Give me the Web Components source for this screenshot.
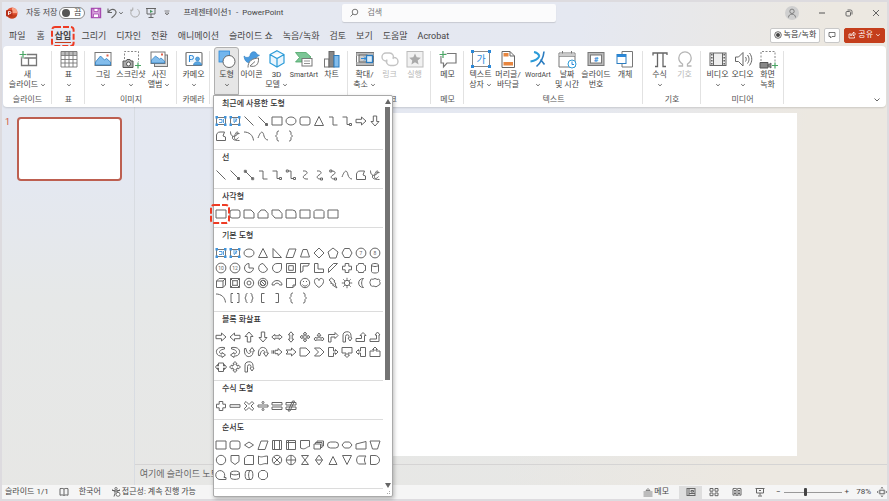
<!DOCTYPE html>
<html lang="ko">
<head>
<meta charset="utf-8">
<title>프레젠테이션1 - PowerPoint</title>
<style>
body { margin: 0; font-family: Roboto, "Noto Sans CJK KR", sans-serif; font-size: 8px; line-height: 10px; color: #454545; }
</style>
</head>
<body>
<ppt-app></ppt-app>
<script>
const define = (name, html, setup) => customElements.define(name, class extends HTMLElement {
  connectedCallback() {
    if (this.shadowRoot) return;
    const t = document.createElement('template');
    t.innerHTML = typeof html === 'function' ? html(this) : html;
    this.attachShadow({ mode: 'open' }).appendChild(t.content.cloneNode(true));
    if (setup) setup(this);
  }
});

/* ---------- application icons ---------- */
const G = 'fill="none" stroke="#666" stroke-width="1"';
const B = 'fill="none" stroke="#2b88d8" stroke-width="1"';
const ICONS = {
  logo: [12, 12, `<circle cx="6" cy="6" r="5.5" fill="#e2573a"/><path d="M6 .5a5.500 5.500 0 0 1 5.500 5.500H6z" fill="#f9a184"/><path d="M.7 7.500a5.500 5.500 0 0 0 10.600 0z" fill="#c43e1c"/><rect x="0" y="3" width="6.500" height="6.500" rx="1" fill="#b7301a"/><path d="M2.500 8V4.500h1.300a1.100 1.100 0 0 1 0 2.200H2.500" fill="none" stroke="#fff" stroke-width=".9"/>`],
  save: [12, 12, `<path d="M1.500 1.500h9v9h-9z" fill="#d7a3dc" stroke="#a64ab0" stroke-width="1.400"/><path d="M4 1.500h4v3H4zM3.500 7h5v3.500h-5z" fill="#fff" stroke="#a64ab0" stroke-width=".8"/>`],
  undo: [12, 12, `<path d="M2 1.500v4h4M2.300 5.200C4 2.500 7 1.500 9 3.200c2.500 2.300.5 4.800-3.500 7.800" fill="none" stroke="#666" stroke-width="1.100"/>`],
  redo: [12, 12, `<path d="M8.500 2.200a4.300 4.300 0 1 1-5.200.3M3.800 .5v2.700H1" fill="none" stroke="#aaa" stroke-width="1"/>`],
  show: [12, 12, `<path d="M1 1.500h10M2 1.500v5.500h8V1.500M6 7v3M3.500 10.500h5" ${G}/><path d="M5 2.800l3 1.700-3 1.600z" fill="#4a9a62"/>`],
  more: [8, 8, `<path d="M1.500 2h5M2 4l2 2 2-2z" fill="none" stroke="#777" stroke-width=".9"/>`],
  caret: [6, 4, `<path d="M1.200 1.200l1.800 1.600 1.800-1.600" fill="none" stroke="currentColor" stroke-width=".9" opacity=".85"/>`],
  chevron: [8, 6, `<path d="M1.500 1.500L4 4l2.500-2.500" fill="none" stroke="#666" stroke-width="1"/>`],
  search: [10, 10, `<circle cx="6" cy="4" r="2.800" fill="none" stroke="#777"/><path d="M4 6L1.500 8.500" stroke="#777"/>`],
  user: [14, 14, `<circle cx="7" cy="7" r="7" fill="#cfcfcf"/><circle cx="7" cy="5.300" r="2.200" fill="none" stroke="#777" stroke-width=".9"/><path d="M3.500 11.500c0-4.500 7-4.500 7 0" fill="none" stroke="#777" stroke-width=".9"/>`],
  min: [8, 8, `<path d="M1 4h6" stroke="#555"/>`],
  restore: [8, 8, `<rect x="1" y="2.500" width="4.500" height="4.500" rx="1" ${G}/><path d="M2.500 1h3a1.500 1.500 0 0 1 1.500 1.500v3" ${G}/>`],
  close: [8, 8, `<path d="M1 1l6 6M7 1L1 7" stroke="#555" stroke-width=".9"/>`],
  record: [8, 8, `<circle cx="4" cy="4" r="3.300" fill="none" stroke="#444" stroke-width=".8"/><circle cx="4" cy="4" r="2" fill="#444"/>`],
  bubble: [8, 8, `<path d="M1 1.500h6v4H4L2.500 7V5.500H1z" fill="none" stroke="#555" stroke-width=".8"/>`],
  share: [8, 8, `<path d="M3 3H1v4h5.500V5.500M2.700 5c.2-2 1.300-2.700 2.800-2.700V1l2 2-2 2V3.700c-1.300 0-2 .3-2.800 1.300z" fill="none" stroke="#fff" stroke-width=".8"/>`],

  newslide: [20, 18, `<path d="M5.500 4.500h13v11h-15v-9M3.500 8h15M10.500 8v7.500" fill="none" stroke="#777" stroke-width="1.300"/><path d="M5 .5v8M1 4.500h8" stroke="#fff" stroke-width="2.600"/><path d="M5 1v7M1.500 4.500h7" stroke="#4aa564" stroke-width="1.200"/>`],
  table: [20, 18, `<path d="M2 1.500h16v16H2z" fill="#fff"/><path d="M2 1h16v4H2z" fill="#bbb"/><path d="M2 1.500h16v15.500H2zM2 5.500h16M2 9.500h16M2 13h16M6 1.500v15.500M10 1.500v15.500M14 1.500v15.500" fill="none" stroke="#777" stroke-width=".9"/>`],
  picture: [20, 18, `<rect x="2" y="2.500" width="16" height="13" fill="#fff" stroke="#777"/><path d="M2.500 12l5-6 4 4 2-1.500 4 3.500v3h-15z" fill="#83bdec" stroke="#2b7cc0" stroke-width=".8"/><rect x="13.500" y="4.500" width="2" height="2" fill="#e0604a"/>`],
  screenshot: [20, 18, `<path d="M3.500 9V1.500h14V12" fill="none" stroke="#888" stroke-dasharray="2 1.500"/><path d="M2 11h3l1-1.500h3l1 1.500h2v6.500H2z" fill="#aaa" stroke="#555"/><circle cx="7.500" cy="14" r="2" fill="#fff" stroke="#555"/><path d="M17 12.500v6M14 15.500h6" stroke="#4aa564" stroke-width="1.200"/>`],
  album: [20, 18, `<rect x="5.500" y="5" width="13" height="11.500" fill="#ddd" stroke="#777"/><rect x="2" y="2" width="14" height="11.500" fill="#fff" stroke="#777"/><path d="M2.500 10l4-4 4 3 1.500-1 3.500 3v2h-13z" fill="#83bdec" stroke="#2b7cc0" stroke-width=".7"/><rect x="12" y="3.500" width="2" height="2" fill="#e0604a"/>`],
  cameo: [20, 18, `<rect x="2" y="2.500" width="16" height="13" rx="1" fill="#fff" stroke="#777" stroke-width="1.200"/><path d="M4.500 5h6v7h-6z" fill="#e4f1fb"/><path d="M5.500 12V5.500h2a2 2 0 0 1 0 4h-2" ${B}/><circle cx="13.500" cy="9" r="2" fill="#5aa7e2" stroke="#2b7cc0" stroke-width=".6"/><path d="M9.500 15c0-4.500 8-4.500 8 0z" fill="#5aa7e2" stroke="#2b7cc0" stroke-width=".6"/>`],
  shapes: [20, 18, `<rect x="2" y="1" width="10.500" height="11" fill="#72b6ee" stroke="#2b88d8" stroke-width=".8"/><circle cx="12" cy="11.500" r="6" fill="#fff" stroke="#666"/>`],
  icons: [20, 18, `<path d="M2 6c2 2 4 2 6 0 0-3 2.500-5 5-4 1.500.5 2 2 2 2.500l2.500.8-3 1.700c0 4-2.500 6-6 6S2.500 11 2 6z" fill="#4a9be0" stroke="#2b7cc0" stroke-width=".6"/><path d="M6 17.500C6 11 10 8.500 16.500 8c.5 6.500-3 9.500-8.500 8L13 11.500" fill="#fff" stroke="#777" stroke-width="1"/>`],
  cube: [20, 18, `<path d="M10 .8l7 3.700v8.500l-7 4-7-4V4.500zM3 4.500l7 4 7-4M10 8.500V17" fill="#e9f5fd" stroke="#2b9bd8" stroke-width="1.200"/>`],
  smartart: [20, 18, `<path d="M1.500 2.500H12l5 4.500-3 2.500H8V12H1.500L5.500 7.500z" fill="#7cc596" stroke="#4aa564" stroke-width=".8"/><rect x="8" y="8.500" width="10" height="7.500" fill="#fff" stroke="#777"/><path d="M10 11h6M10 13.500h6" stroke="#888" stroke-width=".9"/>`],
  chart: [20, 18, `<rect x="2.500" y="9" width="4.500" height="8" fill="#fff" stroke="#777"/><rect x="7" y="1.500" width="5" height="15.500" fill="#888" stroke="#666"/><rect x="12" y="5.500" width="5" height="11.500" fill="#83bdec" stroke="#2b7cc0"/>`],
  zoom: [20, 18, `<rect x="1.500" y="2.500" width="17" height="13" fill="#fff" stroke="#777"/><path d="M1.500 3h17v3h-17zM1.500 12h17v3h-17z" fill="#bbb"/><rect x="4" y="5" width="8" height="7" fill="#ccc" stroke="#666"/><rect x="11.500" y="5.500" width="6" height="7" fill="#d9ecfa" stroke="#2b7cc0" stroke-width="1.300"/><path d="M6 8.500h5M9 6.500l2 2-2 2" ${B}/>`],
  link: [20, 18, `<path d="M7.500 11H6a4 4 0 0 1 0-8h3.500a4 4 0 0 1 3.500 6M12.500 7.500H14a4 4 0 0 1 0 8h-3.500a4 4 0 0 1-3.500-6" fill="none" stroke="#c3c3c3" stroke-width="1.400"/>`],
  action: [20, 18, `<rect x="2" y="1.500" width="16" height="15.500" fill="#f1f1f1" stroke="#bbb"/><path d="M10 3.500l1.700 3.800 4.100.4-3.100 2.700.9 4.100-3.600-2.200-3.600 2.200.9-4.100-3.100-2.700 4.100-.4z" fill="#aaa"/>`],
  memo: [20, 18, `<path d="M5 3.500h13v9.500H9l-3.500 4V13H3V6" fill="#fff" stroke="#777" stroke-width="1.200"/><path d="M5 .5v8M1 4.500h8" stroke="#fff" stroke-width="2.400"/><path d="M5 1v7M1.500 4.500h7" stroke="#4aa564" stroke-width="1.200"/>`],
  textbox: [20, 18, `<rect x="1.500" y="1.500" width="17" height="15" fill="#fff" stroke="#888"/><path d="M0 0h3v3H0zM17 0h3v3h-3zM0 15h3v3H0zM17 15h3v3h-3z" fill="#2b88d8"/><text x="10" y="12.500" font-size="10" text-anchor="middle" fill="#2b88d8">가</text>`],
  header: [20, 18, `<path d="M4 1.500h8l4.500 4.500v11.500H4zM12 1.500V6h4.500" fill="#fff" stroke="#666"/><rect x="5.500" y="3" width="5" height="3.500" fill="#e8863f"/><rect x="5.500" y="12" width="9.500" height="3.500" fill="#e8863f"/>`],
  wordart: [20, 18, `<path d="M6 2c2.500.5 4.500 2 5.500 4M11.500 6C10 9 6 11 2.500 11.500" fill="none" stroke="#2b9bd8" stroke-width="1.800"/><path d="M16 1.500C15.500 7 13 12.500 8.500 16.500M12.500 9.500l4 5" fill="none" stroke="#2b7cc0" stroke-width="1.600"/>`],
  date: [20, 18, `<path d="M2 3h16v14H2zM2 6.500h16M5.500 1v3.500M14.500 1v3.500" fill="#fff" stroke="#777"/><path d="M2.500 3.500h15v3h-15z" fill="#ccc"/><circle cx="15" cy="14" r="4" fill="#fff" stroke="#2b9bd8"/><path d="M15 11.500V14.500h2" ${B}/>`],
  number: [20, 18, `<rect x="2" y="2.500" width="16" height="13" fill="#bbb" stroke="#777"/><rect x="4.500" y="5" width="11" height="8" fill="#fff" stroke="#777"/><text x="10" y="12" font-size="8" font-weight="700" text-anchor="middle" fill="#2b88d8">#</text>`],
  object: [20, 18, `<path d="M7 1.500h10.500v15.500H7z" fill="#fff" stroke="#777"/><rect x="2" y="4.500" width="9" height="9" fill="#fff" stroke="#2b7cc0"/><path d="M2 4.500h9V7H2z" fill="#2b88d8"/>`],
  pi: [20, 18, `<path d="M3 5.500V3h14v2M7.500 3v13.500H5M13 3v13.500h3" fill="none" stroke="#666" stroke-width="1.300"/>`],
  omega: [20, 18, `<path d="M3.500 16h4v-2C5 12.500 3.800 10.500 3.800 8a6.200 6.200 0 0 1 12.400 0c0 2.500-1.200 4.500-3.700 6v2h4" fill="none" stroke="#b5b5b5" stroke-width="1.300"/>`],
  video: [20, 18, `<rect x="2" y="3" width="16" height="12.500" fill="#eee" stroke="#666"/><path d="M5.500 3v12.500M14.500 3v12.500" stroke="#666"/><path d="M3.800 4v11M16.200 4v11" stroke="#666" stroke-width="1.600" stroke-dasharray="1.500 1.500"/>`],
  audio: [20, 18, `<path d="M2.500 7h3L10 2.500v13.500L5.500 11.500h-3zM12.500 7c1 1.500 1 3 0 4.500M14.500 5c2 3 2 5.500 0 8.500M16.500 3c3 4 3 8.500 0 12.500" ${G}/>`],
  screenrec: [20, 18, `<path d="M3 11V1.500h14V12" fill="none" stroke="#888" stroke-dasharray="2 1.500"/><path d="M2 12.500h8v5.500H2z" fill="#888" stroke="#555"/><path d="M10 15l3-2v5l-3-2z" fill="#888" stroke="#555" stroke-width=".8"/><path d="M17 12.500v6M14 15.500h6" stroke="#4aa564" stroke-width="1.200"/>`],

  lang: [10, 10, `<path d="M5 2C4 1.300 2.500 1.300 1 1.700v6.500c1.500-.4 3-.4 4 .3 1-.7 2.500-.7 4-.3V1.700C7.500 1.300 6 1.300 5 2zM5 2v6.500" fill="none" stroke="#555" stroke-width=".9"/>`],
  access: [10, 10, `<circle cx="5" cy="1.700" r="1.200" fill="none" stroke="#555" stroke-width=".8"/><path d="M1 3l3 1v2.500L3 9.500M9 3L6 4v1.500M1 3c1.500 1.300 6.500 1.300 8 0" fill="none" stroke="#555" stroke-width=".9"/><circle cx="7" cy="7.300" r="2" fill="#fff" stroke="#555" stroke-width=".8"/>`],
  notes: [10, 10, `<path d="M.5 5h9M.5 7h9M.5 9h9M3 3.500L5 1.500l2 2z" fill="none" stroke="#666" stroke-width=".8"/>`],
  normal: [10, 10, `<rect x="1" y="1.500" width="8" height="7" ${G}/><path d="M3 2v6M3 6.500h6M5 3.500h2.500v1.500H5z" ${G}/>`],
  sorter: [10, 10, `<path d="M1 1.500h3v2.700H1zM6 1.500h3v2.700H6zM1 6h3v2.700H1zM6 6h3v2.700H6z" ${G}/>`],
  reading: [10, 10, `<path d="M5 2C4 1.300 2.500 1.300 1 1.700v6.500c1.500-.4 3-.4 4 .3 1-.7 2.500-.7 4-.3V1.700C7.500 1.300 6 1.300 5 2zM5 2v6.500M2 3.500h2M2 5h2M2 6.500h2M6 3.500h2M6 5h2M6 6.500h2" ${G}/>`],
  present: [10, 10, `<path d="M.5 1.500h9M1.500 1.500v4.500h7V1.500M5 6v2.500M3 9h4M4 3.500h2" ${G}/>`],
  fit: [10, 10, `<rect x="2.800" y="3.200" width="4.400" height="3.600" ${G}/><path d="M3.800 1.500L5 .4l1.200 1.100M3.800 8.500L5 9.600l1.200-1.100M1.400 3.800L.3 5l1.100 1.200M8.600 3.800L9.700 5 8.600 6.200" ${G}/>`]
};
define('ui-icon', el => {
  const [w, h, body] = ICONS[el.getAttribute('name')];
  return `<style>:host{display:inline-flex;flex:none}svg{display:block;overflow:visible}</style>
  <svg width="${w}" height="${h}" viewBox="0 0 ${w} ${h}" aria-hidden="true">${body}</svg>`;
});

/* ---------- shape gallery glyphs, drawn in a 14 x 14 box ---------- */
const circ = (r, x = 7, y = 7) => `M${x - r} ${y}a${r} ${r} 0 1 0 ${2 * r} 0a${r} ${r} 0 1 0 ${-2 * r} 0z`;
const num = n => `<path d="${circ(4.9)}"/><text x="7" y="9" font-size="5" text-anchor="middle" fill="#666" stroke="none">${n}</text>`;
const tbox = d => `<path d="M2.500 3.500h9v7h-9z" stroke="#777"/><path d="${d}" stroke="#2b88d8" stroke-width=".8"/><path d="M1.500 2h2.500v2.500H1.500zM10 2h2.500v2.500H10zM1.500 9.500h2.500V12H1.500zM10 9.500h2.500V12H10z" fill="#3f94dc" stroke="none"/>`;
const dot = (x, y) => `M${x - 1} ${y - 1}h2v2h-2z`;
const P = {
  tb: tbox('M5 5.500h3v3M5 8.500h3M9.500 5v4'), tbv: tbox('M5 5h4L6 9M9 7H5'),
  line: 'M2.500 2.500l9 9', larrow: 'M2.500 2.500l9 9' + dot(10.5, 10.5), ldbl: 'M3 3l8 8' + dot(3.3, 3.3) + dot(10.7, 10.7),
  rect: 'M2 3h10v8H2z', ell: 'M2 7a5 4 0 1 0 10 0a5 4 0 1 0-10 0z',
  rr: 'M4 3h6a2 2 0 0 1 2 2v4a2 2 0 0 1-2 2H4a2 2 0 0 1-2-2V5a2 2 0 0 1 2-2z', tri: 'M7 2.500l4.500 9h-9z',
  elb: 'M3 3h4v8h4.500', elba: 'M2.500 3H7v7.500h3' + dot(10.5, 10.5), elbd: 'M4 3h3v7.500h3' + dot(3.3, 3) + dot(10.5, 10.5),
  cur: 'M5 3c5-.5 5 2.500 2 4s-2 4.500 3 4', cura: 'M5 3c5-.5 5 2.500 2 4s-2 4 1 4' + dot(9.5, 11), curd: 'M5.500 3c4.500 0 4.500 2.500 1.500 4s-2 4 1 4' + dot(9.5, 11) + dot(4.8, 3),
  wave: 'M2 9c3-8 5-7 6-2 .5 2 2 4 4 4', poly: 'M2.500 11.500h9V8L9 7l1.500-4H6C3.500 3 2 5 2.500 8z', scrib: 'M2.500 2.500c0 4 2 5.500 4.500 4.500s4-3.500 2.500-4-3 3-3 5.500 1.500 3 4 0M5 7c-1.500 3 0 4.500 6.500 4.500M8 5l3.500-.5',
  arc: 'M2 3c5 0 9 3 9.500 8.500', lb: 'M9 2C7.500 2 7 2.500 7 4v1.500L5.500 7 7 8.500V10c0 1.500.5 2 2 2', rb: 'M5 2c1.500 0 2 .5 2 2v1.500L8.500 7 7 8.500V10c0 1.500-.5 2-2 2',
  ra: 'M2 5.300h5.500V3L12 7l-4.500 4V8.700H2z', la: 'M12 5.300H6.500V3L2 7l4.500 4V8.700H12z', ua: 'M5.300 12V6.500H3L7 2l4 4.500H8.700V12z', da: 'M5.300 2v5.500H3L7 12l4-4.500H8.700V2z',
  s1: 'M2 3h7l3 3v5H2z', s2: 'M5 3h4l3 3.500V11H2V6.500z', s3: 'M2 3h7l3 3.500V11H5L2 7.500z', r1: 'M2 3h6.500A3.500 3.500 0 0 1 12 6.500V11H2z', r2: 'M3.500 3h7L12 4.500V11H2V4.500z',
  rtri: 'M3 2.500v9h8.500z', para: 'M5 3h7l-3 8.500H2z', trap: 'M5 3.500h4l2.500 7.500h-9z', dia: 'M7 2l5 5-5 5-5-5z', pent: 'M7 2l5 4-2 6H4L2 6z', hex: 'M4.500 2.500h5L12 7l-2.500 4.500h-5L2 7z', oct: 'M5 2.500h4l2.500 2.500v4L9 11.500H5L2.500 9V5z',
  pie: 'M7 2.500V7h4.500A4.500 4.500 0 1 1 7 2.500z', chord: 'M7 2.500L11.500 8A4.500 4.500 0 1 1 5 3z', tear: 'M7 2.500h4.500V7A4.500 4.500 0 1 1 7 2.500z', frame: 'M2.500 2.500h9v9h-9zM4.700 4.700h4.600v4.600H4.700z', hframe: 'M2.500 2.500h9L10 5H5v5l-2.500 1.500z', lsh: 'M2.500 2.500H6v5.500h5.500v3.500h-9z', stripe: 'M7.500 2.500h4l-9 9v-4z',
  plus: 'M5.200 2.500h3.600v2.700h2.700v3.600H8.800v2.700H5.200V8.800H2.500V5.200h2.700z', plaque: 'M4.500 2.500h5c0 1.500.5 2 2 2v5c-1.500 0-2 .5-2 2h-5c0-1.500-.5-2-2-2v-5c1.500 0 2-.5 2-2z', can: 'M3.500 4c0-2 7-2 7 0v6.500c0 2-7 2-7 0zM3.500 4c0 2 7 2 7 0', cube: 'M2.500 5l2.500-2.500h6.500V9L9 11.500H2.500zM2.500 5H9v6.500M9 5l2.500-2.500', bevel: 'M2.500 2.500h9v9h-9zM4.700 4.700h4.600v4.600H4.700zM2.500 2.500l2.200 2.200M11.500 2.500L9.300 4.700M2.500 11.500l2.200-2.200M11.500 11.500L9.300 9.300',
  donut: circ(4.7) + circ(2), no: circ(4.7) + circ(2.8) + 'M5 5l4 4M4 7l3 3M7 4l3 3', barc: 'M2 9a5 4.500 0 0 1 10 0H9.500c0-2.500-5-2.500-5 0z', fold: 'M2.500 2.500h9V9L9 11.500H2.500zM11.500 9H9v2.500', smile: circ(4.7) + 'M4.500 8.500c1 2 4 2 5 0M5 5.500h1M8 5.500h1', heart: 'M7 11.500C0 7 2.500 2 5 2.500c1.500 0 2 1.500 2 2 0-.5.500-2 2-2 2.500-.5 5 4.500-2 9z', bolt: 'M5.500 2L9 5 8 5.500l2 2.500-1 .5 2 3.500-4.500-3 1-.7L4.500 7l1-.7L3 4z', sun: circ(2.7) + 'M7 1.800v2M7 10.200v2M1.800 7h2M10.200 7h2M3.300 3.300l1.500 1.500M9.200 9.200l1.500 1.500M10.700 3.300L9.200 4.800M4.800 9.200l-1.500 1.500', moon: 'M9.500 2.500C3 2.500 3 11.500 9.500 11.500 7 9.500 7 4.500 9.500 2.500z', cloud: 'M2.500 5C2 3 4 2.500 5 3.500c1-1.200 3-1.200 4 0 2-1 3.500.5 2.500 2 1.300 1.500.5 4-1.500 4-1 1.500-3 1.500-4 .5-2 1-4-.5-3.500-2C1.500 7 1.800 5.500 2.500 5z',
  brk: 'M5 2.500H3v9h2M9 2.500h2v9H9', brc: 'M5.500 2.500C4 2.500 4 3 4 5L3 7l1 2c0 2 0 2.500 1.500 2.500M8.500 2.500C10 2.500 10 3 10 5l1 2-1 2c0 2 0 2.500-1.500 2.500', lbr: 'M8.500 2.500h-3v9h3', rbr: 'M5.500 2.500h3v9h-3',
  lra: 'M1.800 7l3-2.700v1.500h4.400V4.300l3 2.700-3 2.700V8.200H4.800v1.500z', uda: 'M7 1.800l2.700 3H8.200v4.400h1.500L7 12.200l-2.700-3h1.500V4.800H4.300z', quad: 'M7 2l1.700 2H7.800v2.200H10V5.300L12 7l-2 1.700v-.9H7.800V10h.9L7 12l-1.700-2h.9V7.800H4v.9L2 7l2-1.700v.9h2.200V4h-.9z', tria: 'M7 3l1.800 2.500h-1V8h2.400V7L12 9l-1.800 2v-1H3.800v1L2 9l1.800-2v1h2.400V5.500h-1z',
  bent: 'M2.500 12V4.500H9V2.500l3 3-3 3V7H5v5z', uturn: 'M3 12V6a4 4 0 0 1 8-.5V8h1L10 11 8 8h1V6.500a1.700 1.700 0 0 0-3.500 0V12z', lup: 'M2 8.500h5.500V5.500H6L9 2.500l3 3h-1.500v6H2z', bup: 'M2 9h6.500V5H7l2.500-3L12 5h-1v6.500H2z',
  cr: 'M10.500 2.500C3 1.500 2 6 2.500 7.500c.5 3 3 3.700 5.500 3.500V12.500L11.500 10 8 7.500V9C5 9 3.500 5 10.500 4z', cl: 'M3.500 2.500C11 1.500 12 6 11.500 7.500 11 10.500 8.500 11.200 6 11v1.500L2.500 10 6 7.500V9c3 0 4.500-4-2.500-5z', cu: 'M2.500 3.500C1.500 11 6 12 7.500 11.500c3-.5 3.700-3 3.500-5.500h1.500L10 2.500 7.500 6H9C9 9 5 10.500 4 3.500z', cd: 'M2.500 10.500C1.500 3 6 2 7.500 2.500 10.500 3 11.200 5.500 11 8h1.500L10 11.500 7.500 8H9C9 5 5 3.500 4 10.500z',
  str: 'M2 5.300v3.400M3.500 5.300v3.400M5 5.300h3V3.500L12 7l-4 3.500V8.700H5z', notch: 'M2 5h5.500V3L12 7l-4.500 4V9H2l2-2z', home: 'M2 3h6l4 4-4 4H2z', chev: 'M2.500 3H8l4 4-4 4H2.500l4-4z', rcall: 'M2.500 2.500h5v3.500h2V4.500L12 7 9.500 9.500V8h-2v3.500h-5z', dcall: 'M2 2.500h10V8H8v2h1.500L7 12.500 4.500 10H6V8H2z', lcall: 'M11.500 2.500h-5V6h-2V4.500L2 7l2.500 2.500V8h2v3.500h5z', ucall: 'M2 11.500h10V6H8V4.500h1.500L7 2 4.500 4.500H6V6H2z', lrcall: 'M4.500 3h5v3h1V4.500L12.500 7l-2 2.500V8h-1v3.500h-5V8h-1v1.500L1.500 7l2-2.500V6h1z', qcall: 'M7 1.500L9 3.700H8V5h1.200v1h1V5L12.500 7l-2.300 2V8h-1v1H8v1.300h1L7 12.500l-2-2.200h1V9H4.800V8h-1v1L1.500 7l2.300-2v1h1V5H6V3.700H5z',
  minus: 'M2 5.700h10v2.600H2z', mul: 'M4 2.500l3 3 3-3L11.800 4.300 9 7l2.800 2.800L10 11.500l-3-3-3 3-1.800-1.700L5 7 2.200 4.300z', div: 'M2 6h10v2H2z' + circ(1, 7, 3.5) + circ(1, 7, 10.5), eq: 'M2 3.500h10V6H2zM2 8h10v2.500H2z', neq: 'M2 3.500h10V6H2zM2 8h10v2.500H2zM4 12l4.500-10h2L6 12z',
  fdia: 'M7 4l4.500 3L7 10 2.500 7z', pre: 'M2.500 2.500h9v9h-9zM4.500 2.500v9M9.500 2.500v9', stor: 'M2.500 2.500h9v9h-9zM4.500 2.500v9M2.500 4.500h9', doc: 'M2.500 2.500h9v6c-3 0-4 4-9 1.500z', docs: 'M2 6h6.500v5H2zM3.500 6V4.500H10V9.500H8.500M5 4.500V3h6.500v5H10', term: 'M4.500 4h5a3 3 0 0 1 0 6h-5a3 3 0 0 1 0-6z', prep: 'M4.500 4h5L12 7l-2.500 3h-5L2 7z', manin: 'M2 6l10-2.500V11H2z', manop: 'M2 3h10l-2.500 8h-5z', conn: circ(4.7), off: 'M3 2.500h8v6l-4 3-4-3z', card: 'M5 2.500h6.500v9h-9V5z', tape: 'M2.500 3c3 2 5 0 9 0v8c-4-1.500-6 2-9 0z', sumj: circ(4.7) + 'M3.800 3.800l6.400 6.400M10.200 3.800l-6.400 6.400', or: circ(4.7) + 'M2.500 7h9M7 2.500v9', coll: 'M3.500 2.500h7l-7 9h7z', sort: 'M7 2l3.500 5L7 12 3.500 7zM3.500 7h7', extr: 'M7 3.500l4 8H3z', merg: 'M2.500 2.500h9l-4.500 9z', sdata: 'M4.500 3H12c-2 2-2 6 0 8H4.500C2 9 2 5 4.500 3z', delay: 'M2.500 2.500H7a4.500 4.500 0 0 1 0 9H2.500z', seq: 'M7 11.500h5v-2H10A4.500 4.500 0 1 0 7 11.500z', mdisk: 'M2.500 5c0-2.500 9-2.500 9 0v4.500c0 2.500-9 2.500-9 0zM2.500 5c0 2.500 9 2.500 9 0', dasd: 'M5 2.500h4c2.500 0 2.500 9 0 9H5c-2.500 0-2.500-9 0-9zM8.500 2.500c-2.500 0-2.500 9 0 9'
};
for (const n of [7, 8, 10, 12]) P['n' + n] = num(n);
define('shape-cell', el => {
  const d = P[el.getAttribute('kind')];
  return `<style>:host{display:block}button{display:grid;place-items:center;width:100%;height:15px;padding:0;border:0;background:none;font:inherit}
  svg{display:block;overflow:visible;fill:none;stroke:#666;stroke-width:1}button:hover{background:#eee}</style>
  <button aria-label="${el.getAttribute('kind')}"><svg width="14" height="14" viewBox="0 0 14 14">${d[0] === '<' ? d : `<path d="${d}"/>`}</svg></button>`;
});
define('shape-section', el => `<style>
  :host{display:block;border-bottom:1px solid #dcdcdc;padding-bottom:6px}
  h3{margin:0;padding:3px 8px 4px;font-size:8px;line-height:10px;font-weight:500;color:#333}
  .grid{display:grid;grid-template-columns:repeat(12,14px);justify-content:start}
  </style><h3>${el.getAttribute('heading')}</h3><div class="grid">${el.getAttribute('shapes').split(' ').map(k => `<shape-cell kind="${k}"></shape-cell>`).join('')}</div>`);

define('mark-frame', `<style>:host{position:absolute;pointer-events:none;z-index:3}svg{display:block;width:100%;height:100%;overflow:visible}</style>
  <svg><rect x="1" y="1" width="90%" height="90%" rx="3" fill="none" stroke="#ee3b24" stroke-width="2" stroke-dasharray="6 2"/></svg>`);

define('shape-menu', `<style>
  :host{position:absolute;top:100%;left:-1px;z-index:10;display:flex;flex-direction:column;background:#fff;border:1px solid #aaa;border-radius:0 2px 2px 2px;box-shadow:1px 2px 4px #0004;text-align:left;color:#444;box-sizing:border-box}
  .main{display:flex}.list{display:block;width:169px}
  .scroll{display:flex;flex-direction:column;align-items:center;width:9px;padding:3px 0 1px;box-sizing:border-box}
  .thumb{flex:0 1 273px;width:5px;background:#737373;margin-top:3px}.gap{flex:1}
  svg{display:block;fill:#666}
  footer{display:flex;justify-content:flex-end;height:7px;padding:0 1px}
  .wrap{position:relative}mark-frame{left:-4px;top:15px;width:20px;height:20px}
  </style>
  <div class="main"><div class="list">
  <shape-section heading="최근에 사용한 도형" shapes="tb tbv line larrow rect ell rr tri elb elba ra da poly scrib arc wave lb rb"></shape-section>
  <shape-section heading="선" shapes="line larrow ldbl elb elba elbd cur cura curd wave poly scrib"></shape-section>
  <div class="wrap"><shape-section heading="사각형" shapes="rect rr s1 s2 s3 r1 rect r2 rect"></shape-section><mark-frame></mark-frame></div>
  <shape-section heading="기본 도형" shapes="tb tbv ell tri rtri para trap dia pent hex n7 n8 n10 n12 pie chord tear frame hframe lsh stripe plus plaque can cube bevel donut no barc fold smile heart bolt sun moon cloud arc brk brc lbr rbr lb rb"></shape-section>
  <shape-section heading="블록 화살표" shapes="ra la ua da lra uda quad tria bent uturn lup bup cr cl cu cd str notch home chev rcall dcall lcall ucall lrcall qcall uturn"></shape-section>
  <shape-section heading="수식 도형" shapes="plus minus mul div eq neq"></shape-section>
  <shape-section heading="순서도" shapes="rect rr fdia para pre stor doc docs term prep manin manop conn off card tape sumj or coll sort extr merg sdata delay seq mdisk dasd oct"></shape-section>
  </div><div class="scroll"><svg width="6" height="5"><path d="M3 0l3 5H0z"/></svg><div class="thumb"></div><div class="gap"></div><svg width="6" height="5"><path d="M0 0h6L3 5z"/></svg></div></div>
  <footer><svg width="6" height="6"><path d="M4 4h1v1H4zM2 4h1v1H2zM4 2h1v1H4z" fill="#aaa"/></svg></footer>`);

/* ---------- ribbon ---------- */
define('ribbon-button', el => `<style>
  :host{display:block;position:relative;width:var(--w,25px)}
  button{display:flex;flex-direction:column;align-items:center;width:100%;height:48px;padding:3px 0 0;border:1px solid transparent;border-width:0 1px;background:none;font:inherit;color:${el.hasAttribute('off') ? '#b8b8b8' : 'inherit'};box-sizing:border-box}
  :host([active]) button{background:#e6e6e6;border:1px solid #b0b0b0;padding-top:2px;border-radius:3px 3px 0 0}
  :host([latin]) .t{font-size:7px}
  .t{display:block;margin-top:2px;white-space:nowrap;text-align:center}
  ui-icon{vertical-align:middle}.below{display:flex;justify-content:center;height:10px;align-items:center}
  </style><button><ui-icon name="${el.getAttribute('icon')}"></ui-icon><span class="t"><slot></slot>${el.getAttribute('caret') === 'inline' ? ' <ui-icon name="caret"></ui-icon>' : ''}</span>${el.getAttribute('caret') === 'below' ? '<span class="below"><ui-icon name="caret"></ui-icon></span>' : ''}</button><slot name="menu"></slot>`);
define('ribbon-group', el => `<style>
  :host{display:flex;flex-direction:column;justify-content:space-between;padding:0 4px 2px;position:relative}
  :host::after{content:"";position:absolute;right:0;top:4px;bottom:3px;width:1px;background:#e2e2e2}
  .row{display:flex;justify-content:center}.name{text-align:center;color:#555;white-space:nowrap}
  </style><div class="row"><slot></slot></div><div class="name">${el.getAttribute('name') || ''}</div>`);
define('ribbon-bar', `<style>
  :host{display:flex;background:#fff;border-radius:4px;box-shadow:0 1px 2px #0002;height:61px;padding-top:1px;box-sizing:border-box;margin:0 1px;position:relative;z-index:5}
  ribbon-group.tight{padding-left:0;padding-right:0}.end{margin-left:auto;align-self:flex-end;padding:4px 5px;border:0;background:none;display:flex}
  </style>
  <ribbon-group name="슬라이드" class="tight"><ribbon-button icon="newslide" caret="inline" style="--w:49px">새<br>슬라이드</ribbon-button></ribbon-group>
  <ribbon-group name="표"><ribbon-button icon="table" caret="below">표</ribbon-button></ribbon-group>
  <ribbon-group name="이미지"><ribbon-button icon="picture" caret="below" style="--w:28px">그림</ribbon-button><ribbon-button icon="screenshot" caret="below" style="--w:28px">스크린샷</ribbon-button><ribbon-button icon="album" caret="inline" style="--w:28px">사진<br>앨범</ribbon-button></ribbon-group>
  <ribbon-group name="카메라"><ribbon-button icon="cameo" caret="below">카메오</ribbon-button></ribbon-group>
  <ribbon-group><ribbon-button icon="shapes" caret="below" active style="--w:25px">도형<shape-menu slot="menu"></shape-menu></ribbon-button><ribbon-button icon="icons">아이콘</ribbon-button><ribbon-button icon="cube" caret="inline">3D<br>모델</ribbon-button><ribbon-button icon="smartart" latin style="--w:30px">SmartArt</ribbon-button><ribbon-button icon="chart">차트</ribbon-button></ribbon-group>
  <ribbon-group name="링크"><ribbon-button icon="zoom" caret="inline">확대/<br>축소</ribbon-button><ribbon-button icon="link" off>링크</ribbon-button><ribbon-button icon="action" off>실행</ribbon-button></ribbon-group>
  <ribbon-group name="메모"><ribbon-button icon="memo">메모</ribbon-button></ribbon-group>
  <ribbon-group name="텍스트"><ribbon-button icon="textbox" caret="inline">텍스트<br>상자</ribbon-button><ribbon-button icon="header" style="--w:30px">머리글/<br>바닥글</ribbon-button><ribbon-button icon="wordart" caret="below" latin style="--w:30px">WordArt</ribbon-button><ribbon-button icon="date" style="--w:28px">날짜<br>및 시간</ribbon-button><ribbon-button icon="number" style="--w:30px">슬라이드<br>번호</ribbon-button><ribbon-button icon="object" style="--w:28px">개체</ribbon-button></ribbon-group>
  <ribbon-group name="기호"><ribbon-button icon="pi" caret="below">수식</ribbon-button><ribbon-button icon="omega" off>기호</ribbon-button></ribbon-group>
  <ribbon-group name="미디어"><ribbon-button icon="video" caret="below">비디오</ribbon-button><ribbon-button icon="audio" caret="below">오디오</ribbon-button><ribbon-button icon="screenrec">화면<br>녹화</ribbon-button></ribbon-group>
  <button class="end" aria-label="리본 접기"><ui-icon name="chevron"></ui-icon></button>`);

/* ---------- title bar and tabs ---------- */
define('title-bar', `<style>
  :host{display:grid;grid-template-columns:340fr 213fr 331fr;height:22px;align-items:center}
  .l,.r{display:flex;align-items:center;white-space:nowrap}
  .l{padding-left:4px}.r{justify-content:flex-end;gap:19px;padding-right:7px}
  button{display:flex;padding:0;border:0;background:none;font:inherit;color:inherit}
  .auto{margin-left:8px;display:flex;align-items:center;gap:2px}
  .sw{position:relative;display:flex;align-items:center;width:26px;height:12px;border:1px solid #888;border-radius:7px;box-sizing:border-box;background:#fff;justify-content:flex-end;padding-right:3px}
  .sw input{position:absolute;inset:0;opacity:0;margin:0}
  .sw i{position:absolute;left:2px;width:8px;height:8px;border-radius:50%;background:#555}
  .search{display:flex;align-items:center;gap:8px;height:18px;padding:0 7px;background:#fbfbfc;border-radius:2px;box-shadow:0 1px 1px #0002}
  .search input{flex:1;min-width:0;border:0;background:none;padding:0;font:inherit;outline:0}
  .search input::placeholder{color:#777;opacity:1}
  .u{margin-left:4px}.re{margin-left:5px}.m{margin-left:6px}.doc{margin-left:12px}
  </style>
  <div class="l"><ui-icon name="logo"></ui-icon>
  <label class="auto">자동 저장<span class="sw"><input type="checkbox" role="switch" aria-label="자동 저장"><i></i>끔</span></label>
  <button class="re" aria-label="저장"><ui-icon name="save"></ui-icon></button><button class="u" aria-label="실행 취소"><ui-icon name="undo"></ui-icon></button><button aria-label="실행 취소 목록"><ui-icon name="caret"></ui-icon></button><button class="re" aria-label="다시 실행"><ui-icon name="redo"></ui-icon></button><button class="u" aria-label="슬라이드 쇼 시작"><ui-icon name="show"></ui-icon></button><button class="m" aria-label="빠른 실행 도구 모음"><ui-icon name="more"></ui-icon></button>
  <span class="doc">프레젠테이션1&nbsp; - &nbsp;PowerPoint</span></div>
  <div class="search"><ui-icon name="search"></ui-icon><input type="text" placeholder="검색" aria-label="검색"></div>
  <div class="r"><button aria-label="계정"><ui-icon name="user"></ui-icon></button><button aria-label="최소화"><ui-icon name="min"></ui-icon></button><button aria-label="이전 크기로"><ui-icon name="restore"></ui-icon></button><button aria-label="닫기"><ui-icon name="close"></ui-icon></button></div>`);
define('tab-item', `<style>:host{display:block;position:relative}button{padding:5px 0 3px;border:0;background:none;font:inherit;color:inherit;white-space:nowrap}
  :host([selected]) button{font-weight:700;border-bottom:1px solid #c43e1c;padding-bottom:0}</style><button role="tab"><slot></slot></button><slot name="mark"></slot>`);
define('tab-bar', `<style>
  :host{display:flex;align-items:center;justify-content:space-between;height:22px;padding:0 2px 0 7px;font-size:9px;line-height:12px}
  nav{display:flex;gap:10px}.acts{display:flex;gap:4px;font-size:8px;line-height:10px}
  .home{margin-left:1px}
  mark-frame{left:-4px;top:1px;width:24px;height:21px}
  .acts button{display:flex;align-items:center;gap:2px;height:15px;padding:0 3px;border:1px solid #c8c8c8;border-radius:2px;background:#fff;font:inherit;color:#333;white-space:nowrap}
  .acts .share{background:#c43e1c;border-color:#c43e1c;color:#fff;gap:2px}
  </style><nav role="tablist"><tab-item>파일</tab-item><tab-item class="home">홈</tab-item><tab-item selected>삽입<mark-frame slot="mark"></mark-frame></tab-item><tab-item>그리기</tab-item><tab-item>디자인</tab-item><tab-item>전환</tab-item><tab-item>애니메이션</tab-item><tab-item>슬라이드 쇼</tab-item><tab-item>녹음/녹화</tab-item><tab-item>검토</tab-item><tab-item>보기</tab-item><tab-item>도움말</tab-item><tab-item>Acrobat</tab-item></nav>
  <div class="acts"><button><ui-icon name="record"></ui-icon>녹음/녹화</button><button aria-label="메모"><ui-icon name="bubble"></ui-icon></button><button class="share"><ui-icon name="share"></ui-icon>공유<ui-icon name="caret"></ui-icon></button></div>`);

/* ---------- workspace ---------- */
define('slide-list', `<style>
  :host{display:flex;align-items:flex-start;gap:6px;padding:10px 12px 0 3px;border-right:1px solid #d8dce2;box-sizing:border-box;width:15%}
  b{font-weight:400;font-size:9px;width:6px;color:#d0573c}
  button{flex:1;aspect-ratio:104/64;padding:0;background:#fff;border:2px solid #bd5f50;border-radius:4px;box-sizing:border-box}
  </style><b>1</b><button aria-label="슬라이드 1"></button>`);
define('slide-stage', `<style>
  :host{display:flex;flex-direction:column;flex:1;min-width:0}
  .area{flex:1;display:flex;padding:6px 12% 8px 14%}.slide{flex:1;background:#fff}
  .notes{border-top:1px solid #d5d4d4;padding:3px 5px 5px;font-size:9px;line-height:12px;color:#666;white-space:nowrap}
  </style><div class="area"><div class="slide"></div></div><div class="notes">여기에 슬라이드 노트</div>`);
define('status-bar', `<style>
  :host{display:flex;align-items:center;justify-content:space-between;height:14px;background:#f5f5f5;padding:0 0 0 3px;white-space:nowrap}
  div{display:flex;align-items:center}.l{gap:10px}
  button{display:flex;align-items:center;padding:0;border:0;background:none;font:inherit;color:inherit;gap:1px}
  .v{width:23px;height:13px;justify-content:center}.on{background:#dedede}.memo{margin-right:10px}
  input{appearance:none;width:58px;height:9px;margin:0 3px;background:linear-gradient(#999,#999) center/100% 1px no-repeat}
  input::-webkit-slider-thumb{appearance:none;width:3px;height:8px;background:#444;border-radius:1px}
  .out{margin-left:5px}.pct{margin:0 6px 0 7px}
  </style><div class="l"><span>슬라이드 1/1</span><button aria-label="맞춤법"><ui-icon name="lang"></ui-icon></button><button>한국어</button><button><ui-icon name="access"></ui-icon>접근성: 계속 진행 가능</button></div>
  <div><button class="memo"><ui-icon name="notes"></ui-icon>메모</button><button class="v on" aria-label="기본"><ui-icon name="normal"></ui-icon></button><button class="v" aria-label="여러 슬라이드"><ui-icon name="sorter"></ui-icon></button><button class="v" aria-label="읽기용 보기"><ui-icon name="reading"></ui-icon></button><button class="v" aria-label="슬라이드 쇼"><ui-icon name="present"></ui-icon></button>
  <button class="out" aria-label="축소">−</button><input type="range" min="0" max="100" value="38" aria-label="확대/축소"><button aria-label="확대">+</button><button class="pct">78%</button><button aria-label="창에 맞춤"><ui-icon name="fit"></ui-icon></button></div>`);
define('ppt-app', `<style>
  :host{display:flex;flex-direction:column;height:100vh;min-height:500px;box-sizing:border-box;border:2px solid #dddbdf;
  background:linear-gradient(100deg,#e5e8f200 60%,#ece8e1 85%),linear-gradient(#e5e8f1 0,#e4e8f1 35%,#e6e8e8 60%,#e7e7e5)}
  .work{flex:1;display:flex;min-height:0}
  </style><title-bar></title-bar><tab-bar></tab-bar><ribbon-bar></ribbon-bar><div class="work"><slide-list></slide-list><slide-stage></slide-stage></div><status-bar></status-bar>`);
</script>
</body>
</html>
